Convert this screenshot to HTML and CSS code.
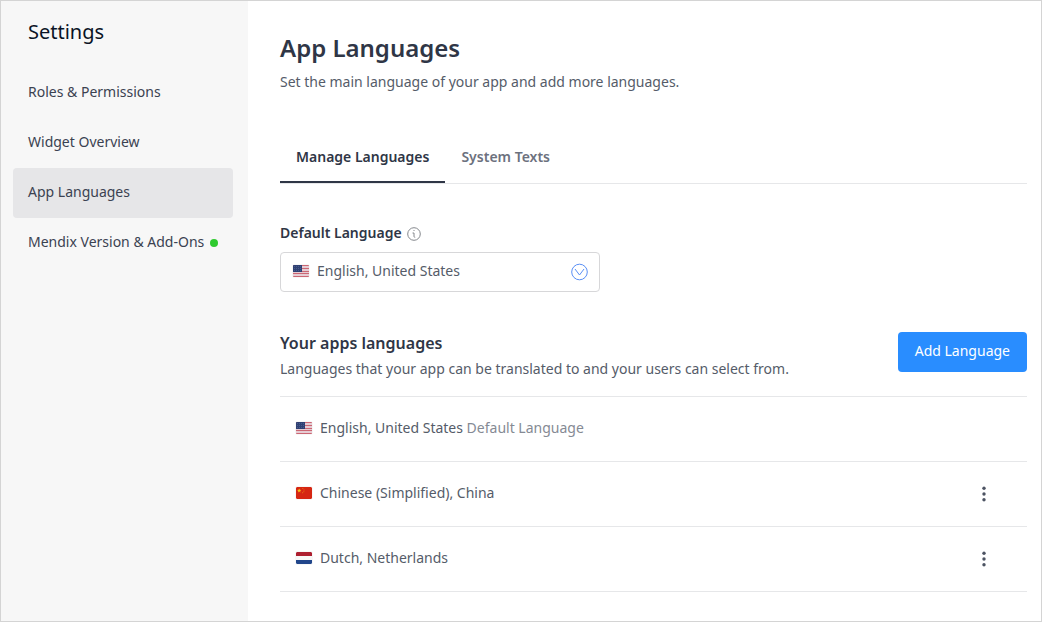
FILE: index.html
```html
<!DOCTYPE html>
<html lang="en">
<head>
<meta charset="utf-8">
<meta name="viewport" content="width=device-width, initial-scale=1">
<title>App Languages</title>
<link rel="stylesheet" href="styles.css">
</head>
<body>
<svg class="symbols" aria-hidden="true">
  <symbol id="flag-us" viewBox="0 0 16 12">
    <rect width="16" height="12" rx="1" fill="#e6ccd3"/>
    <path d="M0 .5h16M0 3.5h16M0 6.500h16M0 8.500h16M0 11.500h16" stroke="#cb6774" stroke-width="1"/>
    <rect width="9" height="7" fill="#2f4174"/>
    <path d="M1 1.500h7M1 3.500h7M1 5.500h7" stroke="#50628f" stroke-width=".8" stroke-dasharray="1 1"/>
  </symbol>
  <symbol id="flag-cn" viewBox="0 0 16 12">
    <rect width="16" height="12" rx="1" fill="#d62612"/>
    <path d="M3.2 1.4l.6 1.4 1.5.1-1.200 1 .4 1.500-1.300-.8-1.300.8.4-1.500-1.200-1 1.500-.1z" fill="#f8c313"/>
    <path d="M6.300 1h1v1h-1zM7.500 2.400h1v1h-1zM7.300 4.200h1v1h-1zM6 5.300h1v1H6z" fill="#e66a16"/>
  </symbol>
  <symbol id="flag-nl" viewBox="0 0 16 12">
    <rect width="16" height="12" rx="1" fill="#f7f7f7"/>
    <path d="M0 4V1a1 1 0 0 1 1-1h14a1 1 0 0 1 1 1v3z" fill="#ad1f30"/>
    <path d="M0 8h16v3a1 1 0 0 1-1 1H1a1 1 0 0 1-1-1z" fill="#21468b"/>
  </symbol>
  <symbol id="dots" viewBox="0 0 16 16">
    <g fill="#4c5362"><circle cx="8" cy="2.200" r="1.700"/><circle cx="8" cy="8" r="1.700"/><circle cx="8" cy="13.800" r="1.700"/></g>
  </symbol>
</svg>
<div class="app">
  <aside class="sidebar">
    <h2 class="sidebar-title">Settings</h2>
    <nav class="menu">
      <a class="menu-item" href="#roles">Roles &amp; Permissions</a>
      <a class="menu-item" href="#widgets">Widget Overview</a>
      <a class="menu-item active" href="#languages" aria-current="page">App Languages</a>
      <a class="menu-item" href="#version">Mendix Version &amp; Add-Ons<span class="status"></span></a>
    </nav>
  </aside>
  <main class="content">
    <h1 class="title">App Languages</h1>
    <p class="text">Set the main language of your app and add more languages.</p>
    <div class="tabs" role="tablist">
      <button class="tab selected" role="tab" aria-selected="true">Manage Languages</button>
      <button class="tab" role="tab" aria-selected="false">System Texts</button>
    </div>
    <div class="field-head">
      <label for="default-language">Default Language</label>
      <svg class="info" viewBox="0 0 14 14" fill="none" stroke="#85888d" aria-hidden="true"><circle cx="7" cy="7" r="6.300"/><path d="M5.500 6H7v3.500q0 .8 1.200.8M6.500 3.500H7.500"/></svg>
    </div>
    <div class="picker">
      <select id="default-language" class="select">
        <option>English, United States</option>
        <option>Chinese (Simplified), China</option>
        <option>Dutch, Netherlands</option>
      </select>
      <svg class="flag picker-flag" aria-hidden="true"><use href="#flag-us"/></svg>
      <svg class="picker-arrow" viewBox="0 0 18 18" fill="none" stroke="#5a8ff5" aria-hidden="true"><circle cx="9.500" cy="9" r="7.800"/><path d="M5 6l4.500 6L14 6"/></svg>
    </div>
    <section>
      <div class="section-head">
        <div>
          <h2 class="section-title">Your apps languages</h2>
          <p class="text">Languages that your app can be translated to and your users can select from.</p>
        </div>
        <button class="primary">Add Language</button>
      </div>
      <ul class="list">
        <li class="row"><svg class="flag" aria-hidden="true"><use href="#flag-us"/></svg><span class="name">English, United States <span class="muted">Default Language</span></span></li>
        <li class="row"><svg class="flag" aria-hidden="true"><use href="#flag-cn"/></svg><span class="name">Chinese (Simplified), China</span><button class="more" aria-label="Options for Chinese"><svg class="dots"><use href="#dots"/></svg></button></li>
        <li class="row"><svg class="flag" aria-hidden="true"><use href="#flag-nl"/></svg><span class="name">Dutch, Netherlands</span><button class="more" aria-label="Options for Dutch"><svg class="dots"><use href="#dots"/></svg></button></li>
      </ul>
    </section>
  </main>
</div>
</body>
</html>
```
FILE: styles.css
```css
* {
  box-sizing: border-box;
}

body,
h1,
h2,
p,
ul {
  margin: 0;
  padding: 0;
}

body,
button,
select {
  font-family: "Noto Sans", sans-serif;
  font-size: 14px;
  line-height: 20px;
}

button {
  border: 0;
  background: none;
  cursor: pointer;
}

.symbols {
  position: absolute;
  width: 0;
  height: 0;
}

.app {
  display: flex;
  min-height: 100vh;
  border: 1px solid #d4d4d4;
  background: #fff;
}

.sidebar {
  flex: none;
  width: 247px;
  padding: 16px 15px 16px 12px;
  background: #f7f7f7;
}

.sidebar-title {
  padding-left: 15px;
  margin-bottom: 21px;
  color: #0a1325;
  font-size: 20px;
  font-weight: 400;
  line-height: 30px;
}

.menu {
  display: flex;
  flex-direction: column;
}

.menu-item {
  display: flex;
  align-items: center;
  gap: 6px;
  height: 50px;
  padding: 0 8px 2px 15px;
  border-radius: 4px;
  color: #3b4251;
  text-decoration: none;
  white-space: nowrap;
}

.menu-item.active {
  background: #e6e6e8;
}

.status {
  width: 8px;
  height: 8px;
  margin-top: 2px;
  border-radius: 50%;
  background: #2fca2f;
}

.content {
  flex: 1;
  min-width: 0;
  padding: 31px 14px 24px 32px;
}

.title {
  margin-bottom: 8px;
  color: #2f3646;
  font-size: 24px;
  font-weight: 600;
  line-height: 32px;
}

.text {
  color: #555c69;
}

.tabs {
  display: flex;
  margin-top: 40px;
  border-bottom: 1px solid #e6e7e9;
}

.tab {
  height: 51px;
  padding: 0 16px;
  border-bottom: 2px solid transparent;
  color: #6c717e;
  font-weight: 600;
}

.tab.selected {
  border-color: #2f3646;
  color: #2f3646;
}

.field-head {
  display: flex;
  align-items: center;
  gap: 5px;
  margin: 39px 0 9px;
  color: #2f3646;
  font-weight: 600;
}

.info {
  width: 14px;
  height: 14px;
  margin-top: 2px;
}

.picker {
  position: relative;
  max-width: 320px;
}

.select {
  display: block;
  width: 100%;
  height: 40px;
  padding: 0 40px 2px 36px;
  border: 1px solid #d7d7d9;
  border-radius: 4px;
  appearance: none;
  background: #fff;
  color: #555c69;
}

.flag {
  flex: none;
  width: 16px;
  height: 12px;
  border-radius: 1px;
  box-shadow: 0 0 1px #aaa;
}

.picker-flag {
  position: absolute;
  top: 13px;
  left: 13px;
  pointer-events: none;
}

.picker-arrow {
  position: absolute;
  top: 11px;
  right: 12px;
  width: 18px;
  height: 18px;
  pointer-events: none;
}

.section-head {
  display: flex;
  align-items: flex-start;
  justify-content: space-between;
  gap: 16px;
  margin-top: 40px;
  padding-bottom: 17px;
}

.section-title {
  margin-bottom: 5px;
  color: #2f3646;
  font-size: 16px;
  font-weight: 600;
  line-height: 22px;
}

.primary {
  flex: none;
  height: 40px;
  padding: 0 17px 2px;
  border-radius: 4px;
  background: #298dff;
  color: #fff;
}

.list {
  border-top: 1px solid #e6e7e9;
  list-style: none;
}

.row {
  display: flex;
  align-items: center;
  gap: 8px;
  height: 65px;
  padding: 0 35px 2px 16px;
  border-bottom: 1px solid #e6e7e9;
}

.name {
  flex: 1;
  color: #555c69;
}

.muted {
  color: #858a94;
}

.more {
  display: flex;
  padding: 2px 0 0;
}

.dots {
  width: 16px;
  height: 16px;
}
```
